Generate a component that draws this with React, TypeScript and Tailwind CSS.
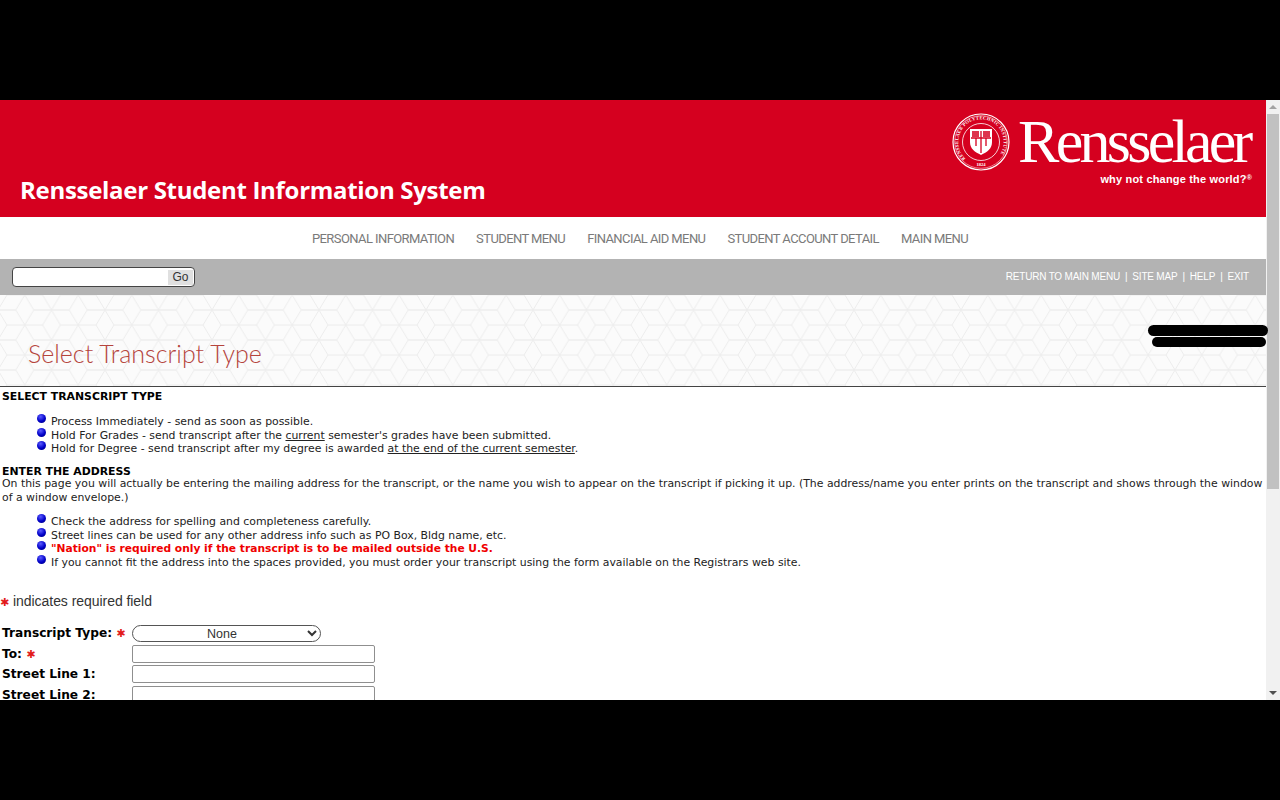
// Rensselaer SIS: Select Transcript Type page
const navItems = [
  "PERSONAL INFORMATION",
  "STUDENT MENU",
  "FINANCIAL AID MENU",
  "STUDENT ACCOUNT DETAIL",
  "MAIN MENU",
];

function Seal() {
  return (
    <svg viewBox="0 0 58 58" width={58} height={58} fill="none" stroke="#fff" aria-hidden="true">
      <defs>
        <path id="sealArc" d="M13.400 45.600A22.800 22.800 0 1 1 44.600 45.600" />
      </defs>
      <circle cx={29} cy={29} r={28} strokeWidth={1.2} />
      <circle cx={29} cy={29} r={26.3} strokeWidth={0.5} />
      <circle cx={29} cy={29} r={18.5} strokeWidth={0.8} />
      <text fontSize={4.6} fontWeight={700} fill="#fff" stroke="none" fontFamily="'Liberation Serif', serif">
        <textPath href="#sealArc" textLength={102}>RENSSELAER POLYTECHNIC INSTITUTE</textPath>
      </text>
      <path d="M18 16h22v13c0 7-5 10-11 13-6-3-11-6-11-13z" fill="#fff" stroke="none" />
      <path d="M20 18h7v6h-7zM31 18h7v6h-7z" fill="#d5001f" stroke="none" opacity={0.8} />
      <path d="M19 25h20M29 18v22M24 25v8M34 25v8" stroke="#d5001f" strokeWidth={1.3} />
      <text x={29} y={53} fontSize={4.6} fontWeight={700} textAnchor="middle" fill="#fff" stroke="none" fontFamily="'Liberation Serif', serif">
        1824
      </text>
    </svg>
  );
}

function Asterisk() {
  return <span className="font-['DejaVu_Sans',sans-serif] text-[11px] font-bold text-[#e21b1b]">✱</span>;
}

function Bullets({ children, className }: { children: React.ReactNode; className?: string }) {
  return <ul className={`ml-[35px] ${className ?? ""}`}>{children}</ul>;
}

function Bullet({ children, className }: { children: React.ReactNode; className?: string }) {
  return (
    <li className={`flex h-[13.5px] items-start leading-[13.5px] ${className ?? ""}`}>
      <span className="mr-[5px] mt-[-1px] h-[9px] w-[9px] shrink-0 rounded-full bg-[radial-gradient(circle_at_40%_30%,#5a5aff,#0000c8_55%,#00006e)]" />
      <span>{children}</span>
    </li>
  );
}

function FormRow({ label, required, children }: { label: string; required?: boolean; children: React.ReactNode }) {
  return (
    <div className="flex h-[20.5px] items-center">
      <label className="w-[132px] shrink-0 pl-[2px] text-[12.2px] font-bold text-black">
        {label} {required && <Asterisk />}
      </label>
      {children}
    </div>
  );
}

function TextInput() {
  return <input type="text" className="h-[18px] w-[243px] rounded-[2px] border border-[#8f8f8f] bg-white" />;
}

export default function App() {
  return (
    <div className="relative flex h-[800px] w-[1280px] flex-col overflow-hidden bg-black">
      <div className="h-[100px] shrink-0" />
      <div className="relative flex h-[600px] shrink-0">
        <div className="h-full w-[1266px] overflow-hidden bg-white font-['DejaVu_Sans',sans-serif] text-[10.88px] text-[#222]">
          {/* Red banner */}
          <header className="flex h-[117px] items-start justify-between bg-[#d5001f] pl-[20px] pr-[14px] text-white">
            <h1 className="mt-[73px] font-['Open_Sans',sans-serif] text-[24px] leading-[34px] font-bold tracking-[-0.3px]">
              Rensselaer Student Information System
            </h1>
            <div className="mt-[13px] flex flex-col items-end">
              <div className="flex items-start">
                <Seal />
                <span className="ml-[8px] w-[234px] font-['Liberation_Serif',serif] text-[62px] leading-[56px] tracking-[-3.7px]">
                  Rensselaer
                </span>
              </div>
              <span className="mt-[1px] font-['Liberation_Sans',sans-serif] text-[11px] leading-[14px] font-bold tracking-[0.18px]">
                why not change the world?<sup className="text-[7px]">®</sup>
              </span>
            </div>
          </header>

          {/* Main nav */}
          <nav className="flex h-[42px] items-center justify-center gap-[22px] pl-[14px] pt-[1px] font-['Roboto',sans-serif] text-[13px] tracking-[-0.59px] text-[#7a7a7a]">
            {navItems.map((item) => (
              <span key={item}>{item}</span>
            ))}
          </nav>

          {/* Search and utility bar */}
          <div className="flex h-[36px] items-center justify-between bg-[#b3b3b3] pl-[12px] pr-[17px]">
            <div className="flex h-[20px] w-[183px] items-center justify-end rounded-[4px] border border-[#444] bg-white pr-[1px]">
              <span className="flex h-[15px] w-[25px] items-center justify-center bg-[#e0e0e0] font-['Liberation_Sans',sans-serif] text-[12px] text-[#333]">
                Go
              </span>
            </div>
            <div className="mb-[1px] flex gap-[5px] font-['Liberation_Sans',sans-serif] text-[10px] tracking-[-0.2px] text-white">
              <span>RETURN TO MAIN MENU</span>
              <span>|</span>
              <span>SITE MAP</span>
              <span>|</span>
              <span>HELP</span>
              <span>|</span>
              <span>EXIT</span>
            </div>
          </div>

          {/* Title band with hex pattern */}
          <div className="relative h-[92px] overflow-hidden border-b border-[#444] bg-[#fbfbfb]">
            <svg className="absolute inset-0 h-full w-full" aria-hidden="true">
              <defs>
                <pattern id="hex" x={-2} y={15} width={53.5} height={30} viewBox="0 0 54 30" patternUnits="userSpaceOnUse">
                  <path
                    d="M0 0H18M36 0H54M0 30H18M36 30H54M9 15H45M0 0 9 15 0 30M54 0 45 15 54 30M18 0 27 15 36 0M18 30 27 15 36 30"
                    fill="none"
                    stroke="#ececec"
                    strokeWidth={1}
                  />
                </pattern>
              </defs>
              <rect width="100%" height="100%" fill="url(#hex)" />
            </svg>
            <h2 className="relative mt-[40px] ml-[28px] font-['Lato',sans-serif] text-[25px] leading-[36px] font-light text-[#b5443c]">
              Select Transcript Type
            </h2>
          </div>

          {/* Page body */}
          <div className="pl-[2px] pt-[3px]">
            <h3 className="text-[10.88px] leading-[14px] font-bold text-black">SELECT TRANSCRIPT TYPE</h3>
            <Bullets className="mt-[11px] mb-[10px]">
              <Bullet>Process Immediately - send as soon as possible.</Bullet>
              <Bullet>
                Hold For Grades - send transcript after the <u>current</u> semester's grades have been submitted.
              </Bullet>
              <Bullet>
                Hold for Degree - send transcript after my degree is awarded <u>at the end of the current semester</u>.
              </Bullet>
            </Bullets>
            <h3 className="text-[10.88px] leading-[11.5px] font-bold text-black">ENTER THE ADDRESS</h3>
            <p className="leading-[13.5px]">
              On this page you will actually be entering the mailing address for the transcript, or the name you wish to
              appear on the transcript if picking it up. (The address/name you enter prints on the transcript and shows
              through the window of a window envelope.)
            </p>
            <Bullets className="mt-[11px] mb-[12px]">
              <Bullet>Check the address for spelling and completeness carefully.</Bullet>
              <Bullet>Street lines can be used for any other address info such as PO Box, Bldg name, etc.</Bullet>
              <Bullet className="text-[10.7px] font-bold text-[#f00000]">
                "Nation" is required only if the transcript is to be mailed outside the U.S.
              </Bullet>
              <Bullet>
                If you cannot fit the address into the spaces provided, you must order your transcript using the form
                available on the Registrars web site.
              </Bullet>
            </Bullets>
            <p className="mt-[24px] ml-[-2px] font-['Liberation_Sans',sans-serif] text-[14px] leading-[16px] tracking-[-0.05px] text-[#333]">
              <Asterisk /> indicates required field
            </p>
            <form className="mt-[12px] ml-[-2px]">
              <FormRow label="Transcript Type:" required>
                <select className="h-[17px] w-[189px] rounded-[9px] border border-[#555] bg-white pl-[3px] text-center font-['Liberation_Sans',sans-serif] text-[12.5px] text-[#333]">
                  <option>None</option>
                </select>
              </FormRow>
              <FormRow label="To:" required>
                <TextInput />
              </FormRow>
              <FormRow label="Street Line 1:">
                <TextInput />
              </FormRow>
              <FormRow label="Street Line 2:">
                <TextInput />
              </FormRow>
            </form>
          </div>
        </div>

        {/* Browser scrollbar */}
        <div className="flex h-full w-[14px] shrink-0 flex-col items-center bg-[#f1f1f1]">
          <span className="mt-[5px] h-0 w-0 border-x-[4px] border-b-[4px] border-x-transparent border-b-[#a3a3a3]" />
          <div className="mt-[5px] h-[375px] w-[12px] bg-[#c1c1c1]" />
          <span className="mt-auto mb-[5px] h-0 w-0 border-x-[4px] border-t-[4px] border-x-transparent border-t-[#505050]" />
        </div>

        {/* Redaction marks drawn over the page */}
        <span className="absolute left-[1148px] top-[225px] h-[11px] w-[120px] rounded-full bg-black" />
        <span className="absolute left-[1152px] top-[237px] h-[10px] w-[114px] rounded-full bg-black" />
      </div>
      <div className="h-[100px] shrink-0" />
    </div>
  );
}
